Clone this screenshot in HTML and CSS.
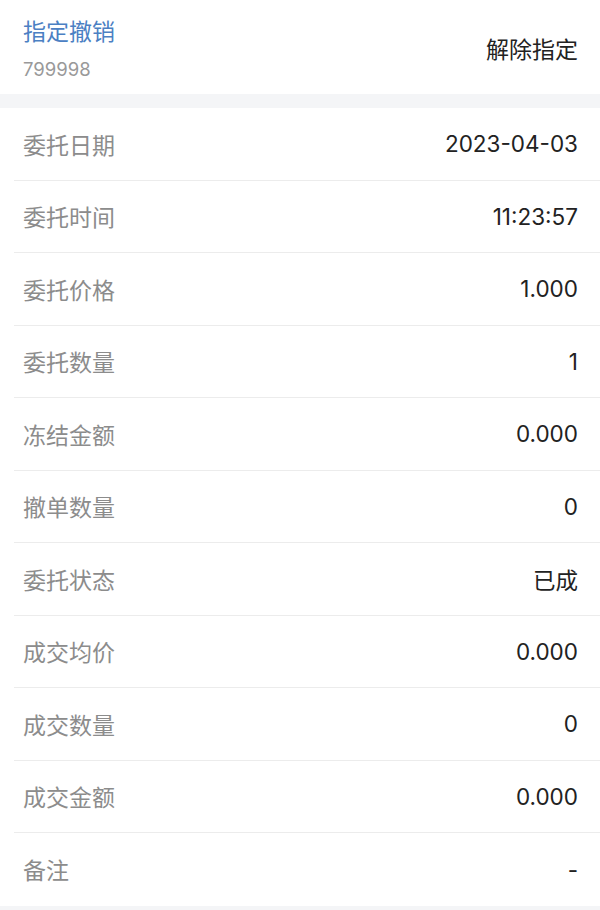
FILE: index.html
```html
<!DOCTYPE html>
<html lang="zh-CN">
<head>
  <meta charset="UTF-8" />
  <title>委托详情</title>
  <link rel="stylesheet" href="styles.css">
</head>
<body>
  <div class="head">
    <div class="head-left">
      <div class="title">指定撤销</div>
      <div class="code">799998</div>
    </div>
    <div class="action">解除指定</div>
  </div>

  <div class="gap"></div>

  <div class="list">
    <div class="row"><span class="label">委托日期</span><span class="value">2023-04-03</span></div>
    <div class="row"><span class="label">委托时间</span><span class="value">11:23:57</span></div>
    <div class="row"><span class="label">委托价格</span><span class="value">1.000</span></div>
    <div class="row"><span class="label">委托数量</span><span class="value">1</span></div>
    <div class="row"><span class="label">冻结金额</span><span class="value">0.000</span></div>
    <div class="row"><span class="label">撤单数量</span><span class="value">0</span></div>
    <div class="row"><span class="label">委托状态</span><span class="value">已成</span></div>
    <div class="row"><span class="label">成交均价</span><span class="value">0.000</span></div>
    <div class="row"><span class="label">成交数量</span><span class="value">0</span></div>
    <div class="row"><span class="label">成交金额</span><span class="value">0.000</span></div>
    <div class="row"><span class="label">备注</span><span class="value">-</span></div>
  </div>
</body>
</html>
```

FILE: styles.css
```css
body { margin: 0; background: #f4f5f7; font-family: Inter, "Noto Sans CJK SC", sans-serif; color: #222; }
.head { display: flex; justify-content: space-between; align-items: center; height: 94px; padding: 0 22px 0 23px; background: #fff; box-sizing: border-box; }
.head-left { display: flex; flex-direction: column; gap: 12px; padding-top: 4px; }
.title { font-size: 23px; color: #4b80c3; line-height: 28px; }
.code { font-size: 18.5px; color: #999; line-height: 22px; }
.action { font-size: 23px; color: #222; margin-top: 2px; }
.gap { height: 14px; }
.list { background: #fff; padding-left: 14px; }
.row { display: flex; justify-content: space-between; align-items: center; height: 72.5px; box-sizing: border-box; padding: 0 22px 0 9px; border-bottom: 1px solid #ececec; font-size: 23px; }
.row:last-child { border-bottom: none; }
.label { color: #8c8c8c; }
.value { color: #222; font-size: 22.5px; }
```
